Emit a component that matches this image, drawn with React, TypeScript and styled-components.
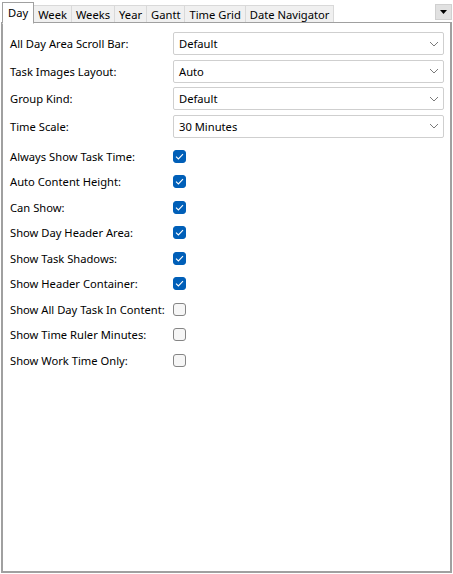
import styled, { createGlobalStyle } from 'styled-components'

const GlobalStyle = createGlobalStyle`
  html, body {
    margin: 0;
    padding: 0;
    background: #ffffff;
  }
  * {
    box-sizing: border-box;
  }
`

const tabs = ['Day', 'Week', 'Weeks', 'Year', 'Gantt', 'Time Grid', 'Date Navigator']

const combos = [
  { label: 'All Day Area Scroll Bar:', value: 'Default' },
  { label: 'Task Images Layout:', value: 'Auto' },
  { label: 'Group Kind:', value: 'Default' },
  { label: 'Time Scale:', value: '30 Minutes' },
]

const checks = [
  { label: 'Always Show Task Time:', checked: true },
  { label: 'Auto Content Height:', checked: true },
  { label: 'Can Show:', checked: true },
  { label: 'Show Day Header Area:', checked: true },
  { label: 'Show Task Shadows:', checked: true },
  { label: 'Show Header Container:', checked: true },
  { label: 'Show All Day Task In Content:', checked: false },
  { label: 'Show Time Ruler Minutes:', checked: false },
  { label: 'Show Work Time Only:', checked: false },
]

const Chevron = () => (
  <svg width="10" height="6" viewBox="0 0 10 6">
    <path d="M1 1 L5 5 L9 1" fill="none" stroke="#7a7a7a" strokeWidth="1" />
  </svg>
)

const Tick = () => (
  <svg width="9" height="7" viewBox="0 0 9 7">
    <path d="M1 3.6 L3.4 6 L8 1.2" fill="none" stroke="#ffffff" strokeWidth="1.1" />
  </svg>
)

export default function App() {
  return (
    <>
      <GlobalStyle />
      <Page>
        <TabStrip>
          <Tabs>
            {tabs.map((t, i) => (
              <Tab key={t} $active={i === 0}>
                {t}
              </Tab>
            ))}
          </Tabs>
          <MenuButton>
            <svg width="7" height="4" viewBox="0 0 7 4">
              <path d="M0 0 L7 0 L3.5 4 Z" fill="#000" />
            </svg>
          </MenuButton>
        </TabStrip>
        <Panel>
          <ComboList>
            {combos.map((c) => (
              <Row key={c.label}>
                <Label>{c.label}</Label>
                <Combo>
                  <span>{c.value}</span>
                  <Chevron />
                </Combo>
              </Row>
            ))}
          </ComboList>
          <CheckList>
            {checks.map((c) => (
              <CheckRow key={c.label}>
                <Label>{c.label}</Label>
                <Box $checked={c.checked}>{c.checked && <Tick />}</Box>
              </CheckRow>
            ))}
          </CheckList>
        </Panel>
      </Page>
    </>
  )
}

const Page = styled.div`
  width: 453px;
  height: 574px;
  display: flex;
  flex-direction: column;
  font-family: 'Noto Sans', 'Open Sans', sans-serif;
  font-size: 11.2px;
  color: #000000;
`

const TabStrip = styled.div`
  display: flex;
  align-items: flex-start;
  justify-content: space-between;
  height: 23px;
  padding: 2px 1px 0 2px;
  margin-bottom: -1px;
`

const Tabs = styled.div`
  display: flex;
  align-items: flex-end;
  height: 22px;
`

const Tab = styled.div<{ $active: boolean }>`
  position: relative;
  z-index: ${(p) => (p.$active ? 2 : 1)};
  height: ${(p) => (p.$active ? '22px' : '19px')};
  padding: ${(p) => (p.$active ? '0 5px 1px' : '0 4px')};
  margin-left: ${(p) => (p.$active ? '0' : '-1px')};
  display: flex;
  align-items: center;
  background: ${(p) => (p.$active ? '#ffffff' : '#f0f0f0')};
  border: 1px solid ${(p) => (p.$active ? '#a0a0a0' : '#d9d9d9')};
  border-bottom: ${(p) => (p.$active ? '1px solid #ffffff' : '1px solid #a0a0a0')};
  line-height: 1;
  white-space: nowrap;
`

const MenuButton = styled.div`
  width: 17px;
  height: 16px;
  margin-top: 2px;
  display: flex;
  align-items: center;
  justify-content: center;
  background: #e1e1e1;
  border: 1px solid #d0d0d0;
`

const Panel = styled.div`
  position: relative;
  z-index: 1;
  flex: 1;
  margin: 0 1px 1px 1px;
  border: 1px solid #a0a0a0;
  border-width: 1px 2px 2px 2px;
  background: #ffffff;
  padding: 9px 6px 0 7px;
`

const ComboList = styled.div`
  display: flex;
  flex-direction: column;
  gap: 4.5px;
`

const Row = styled.div`
  display: flex;
  align-items: center;
  height: 23px;
`

const Label = styled.div`
  width: 163px;
  flex-shrink: 0;
  white-space: nowrap;
`

const Combo = styled.div`
  flex: 1;
  height: 23px;
  display: flex;
  align-items: center;
  justify-content: space-between;
  padding: 0 4px 0 5px;
  border: 1px solid #cfcfcf;
  border-radius: 2px;
  background: #ffffff;
`

const CheckList = styled.div`
  display: flex;
  flex-direction: column;
  margin-top: 6px;
`

const CheckRow = styled.div`
  display: flex;
  align-items: center;
  height: 25.5px;
`

const Box = styled.div<{ $checked: boolean }>`
  width: 13px;
  height: 13px;
  border-radius: 3px;
  display: flex;
  align-items: center;
  justify-content: center;
  background: ${(p) => (p.$checked ? '#005fb8' : '#f6f6f6')};
  border: 1px solid ${(p) => (p.$checked ? '#005fb8' : '#858585')};
`
